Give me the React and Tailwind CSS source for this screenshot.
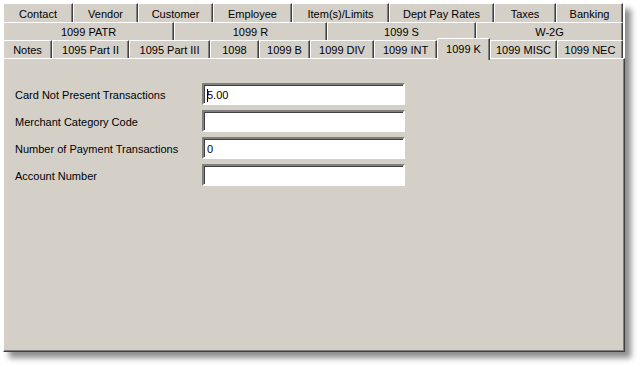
import React from "react";

const row1 = [
  ["Contact", "w-[70px]"],
  ["Vendor", "w-[65px]"],
  ["Customer", "w-[75px]"],
  ["Employee", "w-[79px]"],
  ["Item(s)/Limits", "w-[97px]"],
  ["Dept Pay Rates", "w-[105px]"],
  ["Taxes", "w-[62px]"],
  ["Banking", "w-[67px]"],
];
const row2 = [
  ["1099 PATR", "w-[171px]"],
  ["1099 R", "w-[153px]"],
  ["1099 S", "w-[149px]"],
  ["W-2G", "w-[147px]"],
];
const row3 = [
  ["Notes", "w-[49px]"],
  ["1095 Part II", "w-[77px]"],
  ["1095 Part III", "w-[81px]"],
  ["1098", "w-[49px]"],
  ["1099 B", "w-[51px]"],
  ["1099 DIV", "w-[64px]"],
  ["1099 INT", "w-[63px]"],
  ["1099 K", "w-[53px]", true],
  ["1099 MISC", "w-[67px]"],
  ["1099 NEC", "w-[66px]"],
];

function Tab({ label, w, selected }) {
  if (selected) {
    return (
      <div
        className={`${w} relative z-10 -mt-[2px] -mb-[2px] h-[22px] shrink-0 rounded-tl-[2px] border-l border-t border-r border-l-white border-t-white border-r-[#404040] bg-[#d4d0c8] shadow-[inset_-1px_0_0_#808080] flex items-start justify-center pt-[2px]`}
      >
        {label}
      </div>
    );
  }
  return (
    <div
      className={`${w} h-full shrink-0 rounded-tl-[2px] border-l border-t border-r border-l-white border-t-white border-r-[#404040] bg-[#d4d0c8] shadow-[inset_-1px_0_0_#808080] flex items-center justify-center pt-[2px]`}
    >
      {label}
    </div>
  );
}

function Field({ label, value, caret }) {
  return (
    <div className="flex h-[22px] items-center">
      <div className="w-[187px] pt-[2px]">{label}</div>
      <div className="relative h-[22px] w-[203px] border-2 border-t-[#808080] border-l-[#808080] border-b-white border-r-white bg-white">
        <div className="h-full w-full border-t border-l border-t-[#404040] border-l-[#404040] flex items-center pl-[2px] pt-[1px]">
          {caret && <span className="inline-block h-[13px] w-[1px] bg-black mr-[-1px]" />}
          {value}
        </div>
      </div>
    </div>
  );
}

export default function App() {
  return (
    <div className="h-[367px] w-[640px] bg-white pl-[3px] pt-[3px] text-[11px] text-black font-['Liberation_Sans',sans-serif]">
      <div className="w-[622px] shadow-[6px_6px_6px_rgba(0,0,0,0.45)]">
        <div className="w-[620px]">
          <div className="flex h-[19px]">
            {row1.map(([l, w]) => (
              <Tab key={l} label={l} w={w} />
            ))}
          </div>
          <div className="flex h-[18px]">
            {row2.map(([l, w]) => (
              <Tab key={l} label={l} w={w} />
            ))}
          </div>
          <div className="flex h-[18px] items-end">
            {row3.map(([l, w, s]) => (
              <Tab key={l} label={l} w={w} selected={s} />
            ))}
          </div>
        </div>
        <div className="h-[294px] w-[622px] border-l border-t border-r border-b border-l-white border-t-white border-r-[#404040] border-b-[#404040] bg-[#d4d0c8] shadow-[inset_-1px_-1px_0_#808080] pl-[11px] pt-[24px]">
          <div className="flex flex-col gap-[5px]">
            <Field label="Card Not Present Transactions" value="5.00" caret />
            <Field label="Merchant Category Code" value="" />
            <Field label="Number of Payment Transactions" value="0" />
            <Field label="Account Number" value="" />
          </div>
        </div>
      </div>
    </div>
  );
}
